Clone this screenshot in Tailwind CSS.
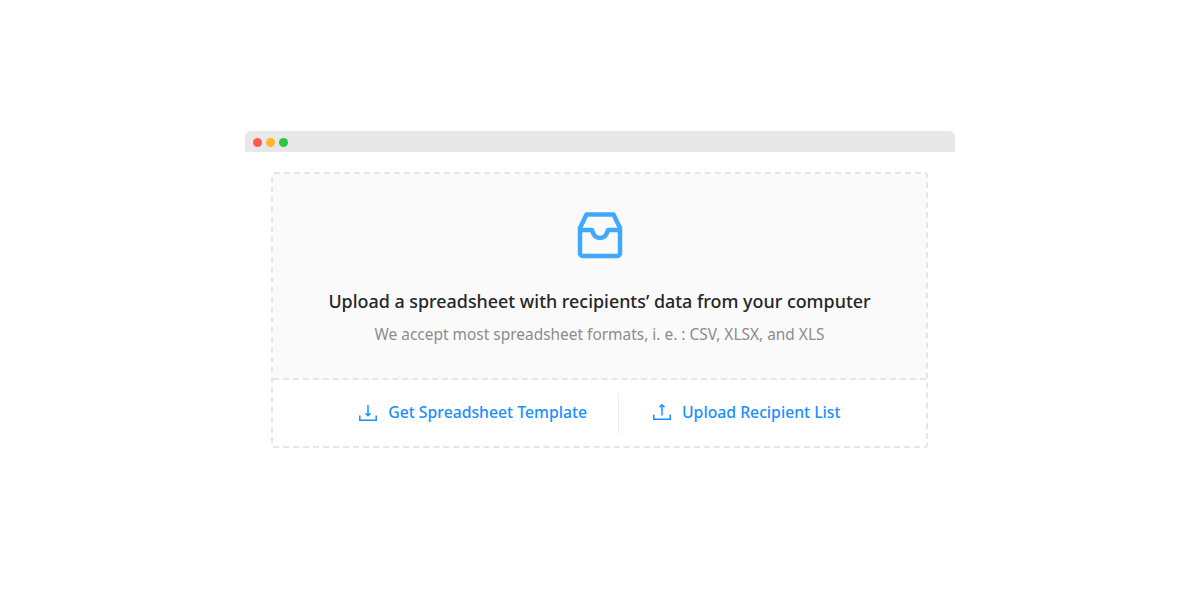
<!DOCTYPE html>
<html lang="en">
<head>
  <meta charset="UTF-8" />
  <title>Upload recipients</title>
  <script src="https://cdn.jsdelivr.net/npm/@tailwindcss/browser@4"></script>
</head>
<body class="bg-white h-[600px] overflow-hidden font-['Noto_Sans',sans-serif]">
  <div class="w-[710px] ml-[245px] pt-[131px]">
    <div class="h-[21px] bg-[#e8e8e8] rounded-t-[6px] flex items-center gap-[4px] pl-[8px] pt-px">
      <span class="w-[9px] h-[9px] rounded-full bg-[#ff5a52]"></span>
      <span class="w-[9px] h-[9px] rounded-full bg-[#ffb52e]"></span>
      <span class="w-[9px] h-[9px] rounded-full bg-[#28c840]"></span>
    </div>
    <div class="mt-[20px] ml-[26px] w-[657px] h-[276px] border-2 border-dashed border-[#e6e6e6] rounded-[3px] flex flex-col">
      <div class="h-[206px] bg-[#fafafa] border-b-2 border-dashed border-[#e6e6e6] flex flex-col items-center pt-[37px]">
        <svg class="w-[48px] h-[48px]" viewBox="0 0 48 48" fill="none" stroke="#40a9ff" stroke-width="4.500" stroke-linejoin="round" stroke-linecap="round">
          <path d="M10.500 3.500H37.500L44 17V42.500A2.500 2.500 0 0 1 41.500 45H6.500A2.500 2.500 0 0 1 4 42.500V17Z" />
          <path d="M4 19H16C17.500 25 20.500 27 24 27S30.500 25 32 19H44" />
        </svg>
        <h1 class="mt-[28px] text-[17.900px] leading-[28px] font-medium text-[#262626]">Upload a spreadsheet with recipients’ data from your computer</h1>
        <p class="mt-[7px] text-[15.450px] leading-[24px] text-[#8c8c8c]">We accept most spreadsheet formats, i. e. : CSV, XLSX, and XLS</p>
      </div>
      <div class="flex-1 flex items-center">
        <a class="w-[345px] flex items-center justify-end gap-[11px] pr-[31px] text-[#1890ff] text-[15.750px] font-medium">
          <svg class="w-[18px] h-[18px]" viewBox="0 0 18 18" fill="none" stroke="#1890ff" stroke-width="1.500">
            <path d="M0.800 11.500V16.200H17.200V11.500" />
            <path d="M9 1V11.500" />
            <path d="M6.500 9.200L9 11.700L11.500 9.200" />
          </svg>
          Get Spreadsheet Template
        </a>
        <div class="w-px h-[41px] bg-[#ececec]"></div>
        <a class="flex items-center gap-[11px] pl-[34px] text-[#1890ff] text-[15.750px] font-medium">
          <svg class="w-[18px] h-[18px] mb-[3px]" viewBox="0 0 18 18" fill="none" stroke="#1890ff" stroke-width="1.500">
            <path d="M0.800 11.500V16.200H17.200V11.500" />
            <path d="M9 12.500V2" />
            <path d="M6.500 4.200L9 1.700L11.500 4.200" />
          </svg>
          Upload Recipient List
        </a>
      </div>
    </div>
  </div>
</body>
</html>
